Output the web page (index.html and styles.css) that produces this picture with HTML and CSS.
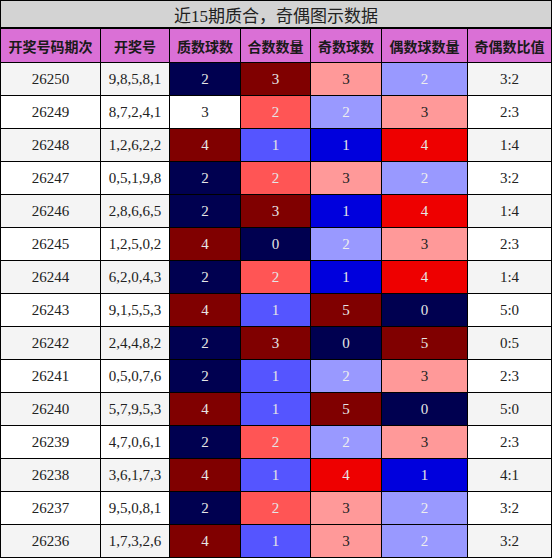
FILE: index.html
```html
<!DOCTYPE html>
<html lang="zh">
<head>
    <meta charset="UTF-8">
    <title>近15期质合，奇偶图示数据</title>
    <link rel="stylesheet" href="styles.css">
</head>
<body>
    <table class="chart">
        <colgroup>
            <col class="w-qi"><col class="w-hao"><col class="w-zhi"><col class="w-he"><col class="w-ji"><col class="w-ou"><col class="w-bi">
        </colgroup>
        <tr class="title-row">
            <td colspan="7">近15期质合，奇偶图示数据</td>
        </tr>
        <tr class="head-row">
            <th>开奖号码期次</th>
            <th>开奖号</th>
            <th>质数球数</th>
            <th>合数数量</th>
            <th>奇数球数</th>
            <th>偶数球数量</th>
            <th>奇偶数比值</th>
        </tr>
        <tr class="odd"><td>26250</td><td>9,8,5,8,1</td><td class="navy">2</td><td class="maroon">3</td><td class="pink">3</td><td class="lilac">2</td><td>3:2</td></tr>
        <tr class="even"><td>26249</td><td>8,7,2,4,1</td><td>3</td><td class="coral">2</td><td class="lilac">2</td><td class="pink">3</td><td>2:3</td></tr>
        <tr class="odd"><td>26248</td><td>1,2,6,2,2</td><td class="maroon">4</td><td class="violet">1</td><td class="blue">1</td><td class="red">4</td><td>1:4</td></tr>
        <tr class="even"><td>26247</td><td>0,5,1,9,8</td><td class="navy">2</td><td class="coral">2</td><td class="pink">3</td><td class="lilac">2</td><td>3:2</td></tr>
        <tr class="odd"><td>26246</td><td>2,8,6,6,5</td><td class="navy">2</td><td class="maroon">3</td><td class="blue">1</td><td class="red">4</td><td>1:4</td></tr>
        <tr class="even"><td>26245</td><td>1,2,5,0,2</td><td class="maroon">4</td><td class="navy">0</td><td class="lilac">2</td><td class="pink">3</td><td>2:3</td></tr>
        <tr class="odd"><td>26244</td><td>6,2,0,4,3</td><td class="navy">2</td><td class="coral">2</td><td class="blue">1</td><td class="red">4</td><td>1:4</td></tr>
        <tr class="even"><td>26243</td><td>9,1,5,5,3</td><td class="maroon">4</td><td class="violet">1</td><td class="maroon">5</td><td class="navy">0</td><td>5:0</td></tr>
        <tr class="odd"><td>26242</td><td>2,4,4,8,2</td><td class="navy">2</td><td class="maroon">3</td><td class="navy">0</td><td class="maroon">5</td><td>0:5</td></tr>
        <tr class="even"><td>26241</td><td>0,5,0,7,6</td><td class="navy">2</td><td class="violet">1</td><td class="lilac">2</td><td class="pink">3</td><td>2:3</td></tr>
        <tr class="odd"><td>26240</td><td>5,7,9,5,3</td><td class="maroon">4</td><td class="violet">1</td><td class="maroon">5</td><td class="navy">0</td><td>5:0</td></tr>
        <tr class="even"><td>26239</td><td>4,7,0,6,1</td><td class="navy">2</td><td class="coral">2</td><td class="lilac">2</td><td class="pink">3</td><td>2:3</td></tr>
        <tr class="odd"><td>26238</td><td>3,6,1,7,3</td><td class="maroon">4</td><td class="violet">1</td><td class="red">4</td><td class="blue">1</td><td>4:1</td></tr>
        <tr class="even"><td>26237</td><td>9,5,0,8,1</td><td class="navy">2</td><td class="coral">2</td><td class="pink">3</td><td class="lilac">2</td><td>3:2</td></tr>
        <tr class="odd"><td>26236</td><td>1,7,3,2,6</td><td class="maroon">4</td><td class="violet">1</td><td class="pink">3</td><td class="lilac">2</td><td>3:2</td></tr>
    </table>
</body>
</html>
```

FILE: styles.css
```css
body {
    margin: 0;
    background: #ffffff;
    font-family: "Liberation Serif", "Noto Sans CJK SC", serif;
    color: #222;
}
.chart {
    width: 551px;
    border-collapse: collapse;
    table-layout: fixed;
    border: 1px solid #000;
}
.w-qi { width: 100px; }
.w-hao { width: 69px; }
.w-zhi { width: 71px; }
.w-he { width: 70px; }
.w-ji { width: 71px; }
.w-ou { width: 86px; }
.w-bi { width: 84px; }
.chart td,
.chart th {
    border: 1px solid #000;
    padding: 0;
    text-align: center;
    font-size: 15px;
}
.title-row td {
    height: 26px;
    background: #d3d3d3;
    font-size: 17px;
    border-bottom: 2px solid #000;
}
.head-row th {
    height: 33px;
    background: #da70d6;
    font-family: "Noto Sans CJK SC", sans-serif;
    font-size: 14px;
    font-weight: bold;
    color: #1a1a1a;
}
.odd td,
.even td {
    height: 32px;
}
.odd td { background: #f4f4f4; }
.even td { background: #ffffff; }

/* cell colours */
.chart .navy { background: #000050; color: #e6e6e6; }
.chart .maroon { background: #800000; color: #e6e6e6; }
.chart .red { background: #ee0000; color: #e6e6e6; }
.chart .blue { background: #0000dd; color: #e6e6e6; }
.chart .coral { background: #ff5555; color: #e6e6e6; }
.chart .violet { background: #5555ff; color: #e6e6e6; }
.chart .pink { background: #ff9999; color: #222; }
.chart .lilac { background: #9999ff; color: #eeeeee; }
```
